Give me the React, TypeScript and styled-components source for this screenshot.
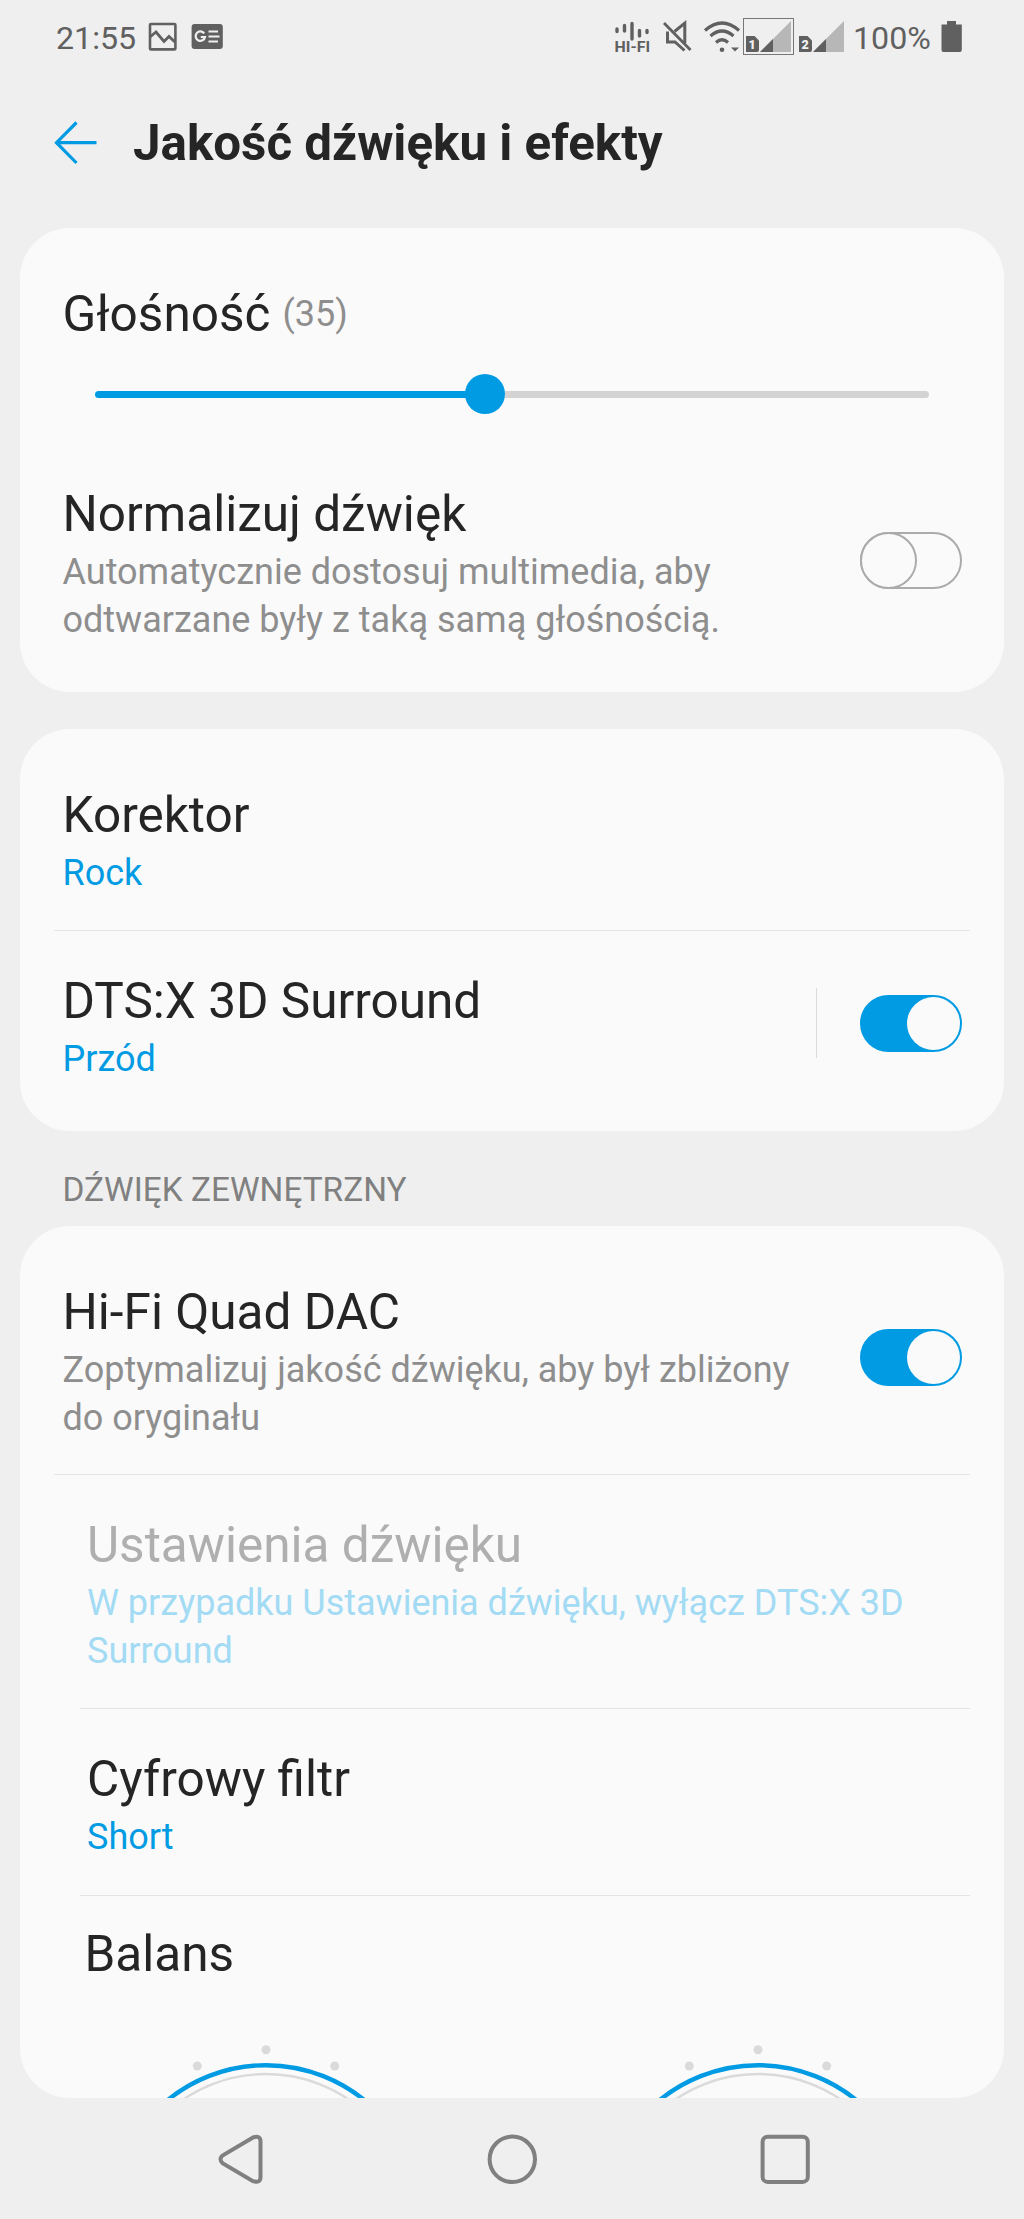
import React from "react";
import styled, { createGlobalStyle } from "styled-components";

const blue = "#009be3";
const ink = "#252525";
const statusInk = "#606060";

const GlobalStyle = createGlobalStyle`
  *, *::before, *::after { box-sizing: border-box; }
  body { margin: 0; background: #efefef; font-family: Roboto, "Liberation Sans", sans-serif; }
`;

const Screen = styled.div`
  width: 1024px;
  height: 2219px;
  display: flex;
  flex-direction: column;
  background: #efefef;
  overflow: hidden;
`;

const StatusBar = styled.header`
  height: 76px;
  flex: none;
  display: flex;
  justify-content: space-between;
  padding: 0 62px 0 56px;
  color: ${statusInk};
`;

const StatusGroup = styled.div`
  display: flex;
  align-items: flex-start;
`;

const StatusText = styled.span<{ $width: number }>`
  width: ${(p) => p.$width}px;
  font-size: 32.2px;
  line-height: 76px;
  white-space: nowrap;
`;

const Glyph = styled.svg<{ $gap?: number }>`
  display: block;
  flex: none;
  margin-left: ${(p) => p.$gap ?? 0}px;
`;

const AppBar = styled.div`
  height: 152px;
  flex: none;
  display: flex;
  align-items: flex-start;
  padding: 35px 54px 0;
`;

const BackButton = styled.button`
  width: 79px;
  height: 64px;
  padding: 0;
  border: 0;
  background: none;
  display: flex;
  align-items: center;
`;

const PageTitle = styled.h1`
  margin: 0;
  font-size: 49.3px;
  line-height: 64px;
  font-weight: 700;
  color: ${ink};
  white-space: nowrap;
`;

const Card = styled.section<{ $height: number; $top?: number }>`
  flex: none;
  height: ${(p) => p.$height}px;
  margin: ${(p) => p.$top ?? 0}px 20px 0;
  border-radius: 50px;
  background: #fafafa;
  overflow: hidden;
  display: flex;
  flex-direction: column;
`;

const Row = styled.div<{ $height: number; $top: number; $indent?: number }>`
  flex: none;
  height: ${(p) => p.$height}px;
  padding: ${(p) => p.$top}px 42px 0 ${(p) => p.$indent ?? 42.5}px;
  display: flex;
  align-items: flex-start;
  justify-content: space-between;
`;

const Texts = styled.div`
  display: flex;
  flex-direction: column;
  gap: 5px;
`;

const Label = styled.div<{ $disabled?: boolean }>`
  font-size: 49.5px;
  line-height: 60px;
  color: ${(p) => (p.$disabled ? "#afafaf" : ink)};
  white-space: nowrap;
`;

const Note = styled.div<{ $tone?: "accent" | "muted" }>`
  font-size: 36px;
  line-height: 47.5px;
  color: ${(p) => (p.$tone === "accent" ? blue : p.$tone === "muted" ? "#a3dbf4" : "#8e8e8e")};
  white-space: nowrap;
`;

const VolumeHeading = styled.div`
  display: flex;
  align-items: center;
  gap: 12px;
`;

const Level = styled.span`
  font-size: 36px;
  line-height: 60px;
  color: #8e8e8e;
`;

const Slider = styled.div`
  flex: none;
  height: 40px;
  margin: 0 75px;
  display: flex;
  align-items: center;
`;

const SliderFill = styled.div`
  width: 372px;
  height: 7px;
  border-radius: 4px 0 0 4px;
  background: ${blue};
`;

const SliderKnob = styled.div`
  width: 40px;
  height: 40px;
  margin-left: -2px;
  border-radius: 50%;
  background: ${blue};
`;

const SliderRest = styled.div`
  flex: 1;
  height: 7px;
  border-radius: 0 4px 4px 0;
  background: #d3d3d3;
`;

const Switch = styled.div<{ $on?: boolean; $top: number }>`
  width: 102px;
  height: 57px;
  flex: none;
  margin-top: ${(p) => p.$top}px;
  border-radius: 29px;
  border: 2px solid ${(p) => (p.$on ? blue : "#ababab")};
  background: ${(p) => (p.$on ? blue : "transparent")};
  display: flex;
  align-items: center;
  justify-content: ${(p) => (p.$on ? "flex-end" : "flex-start")};
`;

const Thumb = styled.div<{ $on?: boolean }>`
  width: ${(p) => (p.$on ? 53 : 57)}px;
  height: ${(p) => (p.$on ? 53 : 57)}px;
  margin-left: ${(p) => (p.$on ? 0 : -2)}px;
  flex: none;
  border-radius: 50%;
  border: ${(p) => (p.$on ? "0" : "2px solid #ababab")};
  background: #fafafa;
`;

const Divider = styled.div<{ $indent?: number }>`
  flex: none;
  height: 1px;
  margin: 0 34px 0 ${(p) => p.$indent ?? 34}px;
  background: #e4e4e4;
`;

const SwitchArea = styled.div`
  display: flex;
  align-items: flex-start;
`;

const VerticalRule = styled.div`
  width: 1px;
  height: 70px;
  margin: 17px 43px 0 0;
  background: #dadada;
`;

const SectionLabel = styled.h2`
  flex: none;
  height: 95px;
  margin: 0;
  padding: 39px 62.5px 0;
  font-size: 33.4px;
  line-height: 40px;
  font-weight: 400;
  color: #808080;
`;

const Dials = styled.div`
  display: flex;
`;

const NavBar = styled.nav`
  flex: 1;
  display: flex;
  align-items: center;
  justify-content: space-between;
  padding: 0 212px 0 216px;
`;

function Toggle({ on, top }: { on?: boolean; top: number }) {
  return (
    <Switch $on={on} $top={top} role="switch" aria-checked={!!on}>
      <Thumb $on={on} />
    </Switch>
  );
}

function Dial() {
  return (
    <svg width="492" height="56" viewBox="0 0 492 56">
      <circle cx="246" cy="6.7" r="4.5" fill="#dadada" />
      <circle cx="177.3" cy="23" r="4.5" fill="#dadada" />
      <circle cx="314.7" cy="23" r="4.5" fill="#dadada" />
      <circle cx="246" cy="178" r="147" fill="none" stroke="#dadada" strokeWidth="2.4" />
      <circle cx="246" cy="178" r="155.8" fill="none" stroke={blue} strokeWidth="4.4" />
    </svg>
  );
}

function Sim({ x, n }: { x: number; n: number }) {
  return (
    <>
      <path d={`M${x} 52V36h8.5l4.5 4.5V50q0 2-2 2z`} fill={statusInk} />
      <text x={x + 6.2} y="49" fontSize="12.5" fontWeight="900" textAnchor="middle" fill="#f2f2f2" fontFamily="Roboto">
        {n}
      </text>
      <path d={`M${x + 14} 52L${x + 45} 21V52z`} fill="#b7b7b7" />
      <path d={`M${x + 14} 52l13-13V52z`} fill={statusInk} />
    </>
  );
}

export default function App() {
  return (
    <>
      <GlobalStyle />
      <Screen>
        <StatusBar>
          <StatusGroup>
            <StatusText $width={92}>21:55</StatusText>
            <Glyph width="30" height="76" viewBox="148 0 30 76">
              <rect x="150" y="24" width="25.4" height="25.4" rx="1" fill="none" stroke={statusInk} strokeWidth="2.6" />
              <path d="M150 37l6-5 8 9.5 5-5 6.5 6" fill="none" stroke={statusInk} strokeWidth="2.8" />
            </Glyph>
            <Glyph $gap={13} width="33" height="76" viewBox="191 0 33 76">
              <rect x="191.6" y="24" width="31.2" height="25" rx="3" fill={statusInk} />
              <path d="M204.2 33.4a4.7 4.7 0 1 0 .8 3.6h-4.2" fill="none" stroke="#f0f0f0" strokeWidth="2.2" />
              <path d="M208.5 31.5h9.5M208.5 36.5h11M208.5 41.5h9.5" stroke="#f0f0f0" strokeWidth="2" />
            </Glyph>
          </StatusGroup>
          <StatusGroup>
            <Glyph width="36" height="76" viewBox="614 0 36 76">
              <path
                d="M617 29v2.5M624.5 25.5v5.5M632 23.5v15.5M639.5 30.5v5.5M647 30.5v2"
                stroke={statusInk}
                strokeWidth="3.4"
                strokeLinecap="round"
              />
              <text
                x="614.6"
                y="52.4"
                fontSize="15.5"
                fontWeight="700"
                fill={statusInk}
                fontFamily="Roboto"
                textLength="35.5"
                lengthAdjust="spacingAndGlyphs"
              >
                HI-FI
              </text>
            </Glyph>
            <Glyph $gap={12} width="32" height="76" viewBox="662 0 32 76">
              <path d="M664 23l26.5 27" stroke={statusInk} strokeWidth="2.8" />
              <path d="M674.5 31.5l10.3-8.3V43M667.5 31.5V42H675l9.5 8.5" fill="none" stroke={statusInk} strokeWidth="3" />
            </Glyph>
            <Glyph $gap={9} width="38" height="76" viewBox="703 0 38 76">
              <path
                d="M705 30.5q17-15 34 0M710.5 36q11.5-10 23 0M716 42.5q6-5.5 12 0"
                fill="none"
                stroke={statusInk}
                strokeWidth="3.2"
              />
              <circle cx="722" cy="49.7" r="2.3" fill={statusInk} />
              <path d="M731 47.5h8l-4 4z" fill={statusInk} />
            </Glyph>
            <Glyph $gap={2} width="51" height="76" viewBox="743 0 51 76">
              <rect x="743.5" y="18.5" width="50" height="36" fill="none" stroke="#777" />
              <Sim x={746} n={1} />
            </Glyph>
            <Glyph $gap={4} width="55" height="76" viewBox="798 0 55 76">
              <Sim x={799} n={2} />
            </Glyph>
            <StatusText $width={87}>100%</StatusText>
            <Glyph width="22" height="76" viewBox="940 0 22 76">
              <path d="M947 21h9v3.5h5.8V50q0 2-2 2H943.5q-2 0-2-2V24.5H947z" fill={statusInk} />
            </Glyph>
          </StatusGroup>
        </StatusBar>

        <AppBar>
          <BackButton aria-label="Wstecz">
            <svg width="44" height="44" viewBox="54 120 44 44">
              <path d="M76.5 121.5L56.5 141.7l20 20.3M56 141.7h40.5" fill="none" stroke={blue} strokeWidth="3.2" />
            </svg>
          </BackButton>
          <PageTitle>Jakość dźwięku i efekty</PageTitle>
        </AppBar>

        <Card $height={464}>
          <Row $height={146} $top={56}>
            <VolumeHeading>
              <Label>Głośność</Label>
              <Level>(35)</Level>
            </VolumeHeading>
          </Row>
          <Slider>
            <SliderFill />
            <SliderKnob />
            <SliderRest />
          </Slider>
          <Row $height={278} $top={70}>
            <Texts>
              <Label>Normalizuj dźwięk</Label>
              <Note>
                Automatycznie dostosuj multimedia, aby
                <br />
                odtwarzane były z taką samą głośnością.
              </Note>
            </Texts>
            <Toggle top={48} />
          </Row>
        </Card>

        <Card $height={402} $top={37}>
          <Row $height={201} $top={56}>
            <Texts>
              <Label>Korektor</Label>
              <Note $tone="accent">Rock</Note>
            </Texts>
          </Row>
          <Divider />
          <Row $height={200} $top={40}>
            <Texts>
              <Label>DTS:X 3D Surround</Label>
              <Note $tone="accent">Przód</Note>
            </Texts>
            <SwitchArea>
              <VerticalRule />
              <Toggle on top={24} />
            </SwitchArea>
          </Row>
        </Card>

        <SectionLabel>DŹWIĘK ZEWNĘTRZNY</SectionLabel>

        <Card $height={872}>
          <Row $height={248} $top={56}>
            <Texts>
              <Label>Hi-Fi Quad DAC</Label>
              <Note>
                Zoptymalizuj jakość dźwięku, aby był zbliżony
                <br />
                do oryginału
              </Note>
            </Texts>
            <Toggle on top={47} />
          </Row>
          <Divider />
          <Row $height={233} $top={40} $indent={67}>
            <Texts>
              <Label $disabled>Ustawienia dźwięku</Label>
              <Note $tone="muted">
                W przypadku Ustawienia dźwięku, wyłącz DTS:X 3D
                <br />
                Surround
              </Note>
            </Texts>
          </Row>
          <Divider $indent={60} />
          <Row $height={186} $top={40} $indent={67}>
            <Texts>
              <Label>Cyfrowy filtr</Label>
              <Note $tone="accent">Short</Note>
            </Texts>
          </Row>
          <Divider $indent={60} />
          <Row $height={147} $top={28} $indent={64.5}>
            <Label>Balans</Label>
          </Row>
          <Dials>
            <Dial />
            <Dial />
          </Dials>
        </Card>

        <NavBar>
          <svg width="50" height="54" viewBox="216 2132 50 54">
            <path
              d="M253 2137.5L222.5 2155.5q-4 3.8 0 7.6L253 2181.1q7.5 2.5 7.5-4V2141.5q0-6.5-7.5-4z"
              fill="none"
              stroke="#808080"
              strokeWidth="4"
            />
          </svg>
          <svg width="54" height="54" viewBox="485 2132 54 54">
            <circle cx="512.3" cy="2159.3" r="22.7" fill="none" stroke="#808080" strokeWidth="4" />
          </svg>
          <svg width="54" height="54" viewBox="758 2132 54 54">
            <rect x="762.6" y="2136.7" width="45.2" height="45.2" rx="5" fill="none" stroke="#808080" strokeWidth="4" />
          </svg>
        </NavBar>
      </Screen>
    </>
  );
}
